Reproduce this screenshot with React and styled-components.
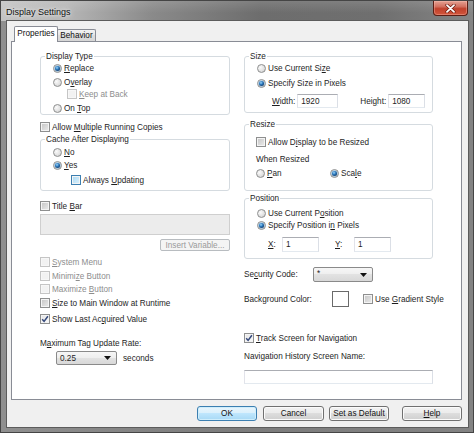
import React from "react";
import styled, { createGlobalStyle } from "styled-components";

const GlobalStyle = createGlobalStyle`
  html, body {
    margin: 0;
    padding: 0;
    background: #6e6e6e;
  }
  body {
    font-family: "Liberation Sans", Arial, sans-serif;
    font-size: 8.2px;
    color: #1e1e1e;
  }
`;

const Window = styled.div`
  width: 474px;
  height: 433px;
  box-sizing: border-box;
  display: flex;
  flex-direction: column;
  border: 1px solid #454545;
  background: linear-gradient(90deg, #8f8f8f 0%, #7c7c7c 50%, #838383 100%);
`;

const TitleBar = styled.div`
  height: 20px;
  flex: none;
  display: flex;
  align-items: flex-start;
  background:
    linear-gradient(rgba(255, 255, 255, 0.12), rgba(255, 255, 255, 0) 60%),
    linear-gradient(90deg, #c4c4c4 0%, #b6b6b6 14%, #8a8a8a 32%, #6d6d6d 55%, #6f6f6f 80%, #858585 100%);
`;

const Title = styled.div`
  padding: 5px 0 0 5px;
  font-size: 9px;
  line-height: 12px;
  color: #111;
  text-shadow: 0 0 6px #e8e8e8, 0 0 3px #f0f0f0;
`;

const CloseButton = styled.div`
  margin-left: auto;
  margin-right: 5px;
  width: 35px;
  height: 15px;
  box-sizing: border-box;
  border: 1px solid #5b1e14;
  border-top: none;
  border-radius: 0 0 4px 4px;
  display: flex;
  align-items: center;
  justify-content: center;
  background: linear-gradient(#e5a293 0%, #d2705f 40%, #c0412c 55%, #d2563c 100%);
  box-shadow: inset 0 0 0 1px rgba(255, 200, 190, 0.35);
`;

const Client = styled.div`
  flex: 1;
  margin: 0 5px 5px 6px;
  background: #f0f0f0;
  box-shadow: 0 0 0 1px #5c5c5c;
  padding: 5px 6px 0 4px;
  display: flex;
  flex-direction: column;
`;

const TabStrip = styled.div`
  height: 15px;
  display: flex;
  align-items: flex-start;
  padding-left: 3px;
`;

const Tab = styled.div`
  position: relative;
  z-index: ${(p) => (p.$active ? 2 : 1)};
  box-sizing: border-box;
  width: ${(p) => p.$w}px;
  height: ${(p) => (p.$active ? 16 : 12)}px;
  margin-top: ${(p) => (p.$active ? 0 : 3)}px;
  margin-left: ${(p) => (p.$active ? 0 : -1)}px;
  border: 1px solid #898c95;
  border-bottom: none;
  border-radius: 2px 2px 0 0;
  background: ${(p) => (p.$active ? "#fff" : "linear-gradient(#f3f3f3, #e4e4e4 50%, #dcdcdc 50%, #d6d6d6)")};
  display: flex;
  align-items: center;
  justify-content: center;
  padding-bottom: ${(p) => (p.$active ? 2 : 0)}px;
  color: #111;
`;

const Panel = styled.div`
  height: 359px;
  box-sizing: border-box;
  border: 1px solid #898c95;
  background: #fff;
  display: grid;
  grid-template-columns: 190px 189px;
  column-gap: 14px;
  align-content: start;
  padding: 9px 0 0 28px;
`;

const Column = styled.div`
  display: flex;
  flex-direction: column;
  min-width: 0;
`;

const Group = styled.fieldset`
  margin: ${(p) => p.$mt || 0}px 0 0 0;
  padding: 0 0 ${(p) => p.$pb || 0}px 0;
  border: 1px solid #d5dbe0;
  border-radius: 3px;
  min-width: 0;
`;

const Legend = styled.legend`
  margin-left: 4px;
  padding: 0 1px;
  height: 11px;
  line-height: 11px;
  font-size: 8.2px;
  color: #1e1e1e;
`;

const GroupBody = styled.div`
  display: flex;
  flex-direction: column;
  padding-left: 12px;
`;

const Row = styled.div`
  display: flex;
  align-items: center;
  height: ${(p) => p.$h || 12}px;
  margin-top: ${(p) => p.$mt || 0}px;
  margin-left: ${(p) => p.$ml || 0}px;
  color: ${(p) => (p.$disabled ? "#8d8d8d" : "#1e1e1e")};
  white-space: nowrap;
`;

const Text = styled.span`
  white-space: pre;
`;

const Label = styled.span`
  display: inline-block;
  width: ${(p) => (p.$w ? `${p.$w}px` : "auto")};
  margin-left: ${(p) => p.$ml || 0}px;
  flex: none;
`;

const U = styled.span`
  text-decoration: underline;
`;

const Box = styled.span`
  width: 10px;
  height: 10px;
  box-sizing: border-box;
  flex: none;
  margin-right: 2px;
  display: flex;
  align-items: center;
  justify-content: center;
  border: 1px solid ${(p) => (p.$disabled ? "#c5c5c5" : p.$hover ? "#3c7fb1" : "#8e8f8f")};
  box-shadow: inset 0 0 0 1px ${(p) => (p.$disabled ? "#f7f7f7" : "#f4f4f4")};
  background: ${(p) =>
    p.$disabled
      ? "#f2f2f2"
      : p.$hover
      ? "linear-gradient(135deg, #a9d8f3, #def2fc)"
      : p.$checked
      ? "linear-gradient(135deg, #e3e3e3, #fbfbfb)"
      : "linear-gradient(135deg, #c4c4c4, #ececec)"};
`;

const Dot = styled.span`
  width: 9px;
  height: 9px;
  margin-right: 2px;
  flex: none;
  box-sizing: border-box;
  border-radius: 50%;
  border: 1px solid #8e8f8f;
  background: radial-gradient(circle at 35% 35%, #fafafa 0%, #e2e2e2 55%, #c6c6c6 100%);
  display: flex;
  align-items: center;
  justify-content: center;
`;

const DotMark = styled.span`
  width: 5px;
  height: 5px;
  border-radius: 50%;
  background: radial-gradient(circle at 40% 35%, #9fd6f8 0%, #2a78bd 40%, #0d2d57 85%);
  box-shadow: 0 0 0 0.5px #7fb2da;
`;

const Field = styled.div`
  box-sizing: border-box;
  width: ${(p) => (p.$w ? `${p.$w}px` : "100%")};
  height: ${(p) => p.$h}px;
  margin-top: ${(p) => p.$mt || 0}px;
  margin-left: ${(p) => p.$ml || 0}px;
  flex: none;
  border: 1px solid;
  border-color: ${(p) => (p.$disabled ? "#cfcfcf" : "#abadb3 #dbdfe6 #e3e9ef #e2e3ea")};
  background: ${(p) => (p.$disabled ? "#ececec" : "#fff")};
  padding-left: 3px;
  display: flex;
  align-items: center;
  color: #1e1e1e;
`;

const Combo = styled.div`
  box-sizing: border-box;
  width: ${(p) => p.$w}px;
  height: ${(p) => p.$h}px;
  margin-left: ${(p) => p.$ml || 0}px;
  flex: none;
  border: 1px solid #8a8a8a;
  border-radius: 2px;
  background: linear-gradient(#f6f6f6, #eeeeee 50%, #e2e2e2 50%, #d8d8d8);
  display: flex;
  align-items: ${(p) => (p.$top ? "flex-start" : "center")};
  justify-content: space-between;
  padding: ${(p) => (p.$top ? "1px 5px 0 3px" : "0 5px 0 3px")};
  color: #1e1e1e;

  svg {
    align-self: center;
  }
`;

const ColorSwatch = styled.div`
  width: 17px;
  height: 16px;
  box-sizing: border-box;
  border: 1px solid #6a6a6a;
  background: #fff;
  flex: none;
`;

const SmallButton = styled.div`
  align-self: flex-end;
  margin-top: 4px;
  width: 70px;
  height: 12px;
  box-sizing: border-box;
  border: 1px solid #b8bcc0;
  border-radius: 2px;
  background: #f4f4f4;
  color: #9a9a9a;
  display: flex;
  align-items: center;
  justify-content: center;
`;

const ButtonBar = styled.div`
  display: flex;
  justify-content: flex-end;
  margin-top: 6px;
  height: 15px;
`;

const Button = styled.div`
  width: ${(p) => p.$w || 60}px;
  margin-left: ${(p) => p.$ml || 0}px;
  box-sizing: border-box;
  border: 1px solid ${(p) => (p.$default ? "#3c7fb1" : "#707070")};
  border-radius: 3px;
  background: ${(p) =>
    p.$default
      ? "linear-gradient(#eaf6fd, #d9f0fc 50%, #bee6fd 50%, #a7d9f5)"
      : "linear-gradient(#f2f2f2, #ebebeb 50%, #dddddd 50%, #cfcfcf)"};
  box-shadow: inset 0 0 0 1px ${(p) => (p.$default ? "#cfeefc" : "#fbfbfb")};
  display: flex;
  align-items: center;
  justify-content: center;
  color: #111;
`;

const Pair = styled.div`
  display: flex;
  align-items: center;
  width: ${(p) => (p.$w ? `${p.$w}px` : "auto")};
`;

const CheckMark = () => (
  <svg width="8" height="8" viewBox="0 0 8 8">
    <path d="M1.2 4.2 L3.1 6.4 L6.9 1.2" fill="none" stroke="#34487a" strokeWidth="1.5" />
  </svg>
);

const Arrow = () => (
  <svg width="7" height="4" viewBox="0 0 7 4">
    <path d="M0 0 H7 L3.5 4 Z" fill="#111" />
  </svg>
);

function Check({ checked, disabled, hover, children, ...rest }) {
  return (
    <Row $disabled={disabled} {...rest}>
      <Box $checked={checked} $disabled={disabled} $hover={hover}>
        {checked && <CheckMark />}
      </Box>
      <Text>{children}</Text>
    </Row>
  );
}

function Radio({ checked, children }) {
  return (
    <Pair>
      <Dot>{checked && <DotMark />}</Dot>
      <Text>{children}</Text>
    </Pair>
  );
}

function LeftColumn() {
  return (
    <Column>
      <Group>
        <Legend>Display Type</Legend>
        <GroupBody>
          <Row>
            <Radio checked>
              <U>R</U>eplace
            </Radio>
          </Row>
          <Row $mt={2}>
            <Radio>
              O<U>v</U>erlay
            </Radio>
          </Row>
          <Check disabled $ml={14}>
            <U>K</U>eep at Back
          </Check>
          <Row $mt={2}>
            <Radio>
              On <U>T</U>op
            </Radio>
          </Row>
        </GroupBody>
      </Group>

      <Check $mt={6}>
        Allow <U>M</U>ultiple Running Copies
      </Check>

      <Group $mt={1} $pb={4}>
        <Legend>Cache After Displaying</Legend>
        <GroupBody>
          <Row $mt={1}>
            <Radio>
              <U>N</U>o
            </Radio>
          </Row>
          <Row $mt={1}>
            <Radio checked>
              <U>Y</U>es
            </Radio>
          </Row>
          <Check hover $mt={3} $ml={18}>
            Always <U>U</U>pdating
          </Check>
        </GroupBody>
      </Group>

      <Check $mt={9}>
        Title <U>B</U>ar
      </Check>
      <Field $disabled $h={21} $mt={2} />
      <SmallButton>Insert Variable...</SmallButton>

      <Check disabled $mt={5}>
        <U>S</U>ystem Menu
      </Check>
      <Check disabled $mt={2}>
        Minimi<U>z</U>e Button
      </Check>
      <Check disabled $mt={1}>
        Maximize <U>B</U>utton
      </Check>
      <Check $mt={2}>
        <U>S</U>ize to Main Window at Runtime
      </Check>
      <Check checked $mt={4}>
        Show Last Ac<U>q</U>uired Value
      </Check>

      <Row $mt={12}>
        <Text>
          M<U>a</U>ximum Tag Update Rate:
        </Text>
      </Row>
      <Row $mt={2} $h={14}>
        <Combo $w={61} $h={14} $ml={16}>
          <span>0.25</span>
          <Arrow />
        </Combo>
        <Label $ml={6}>seconds</Label>
      </Row>
    </Column>
  );
}

function RightColumn() {
  return (
    <Column>
      <Group $pb={4}>
        <Legend>Size</Legend>
        <GroupBody>
          <Row>
            <Radio>
              Use Current Si<U>z</U>e
            </Radio>
          </Row>
          <Row $mt={3}>
            <Radio checked>Specify Size in Pixels</Radio>
          </Row>
          <Row $mt={5} $h={14}>
            <Label $ml={15}>
              <U>W</U>idth:
            </Label>
            <Field $w={41} $h={14} $ml={2}>
              1920
            </Field>
            <Label $ml={22}>
              Hei<U>g</U>ht:
            </Label>
            <Field $w={37} $h={14} $ml={2}>
              1080
            </Field>
          </Row>
        </GroupBody>
      </Group>

      <Group $mt={6} $pb={11}>
        <Legend>Resize</Legend>
        <GroupBody>
          <Check $mt={6} $ml={-1}>
            Allow D<U>i</U>splay to be Resized
          </Check>
          <Row $mt={5} $ml={-1}>
            When Resized
          </Row>
          <Row $mt={2} $ml={-1}>
            <Pair $w={74}>
              <Radio>
                <U>P</U>an
              </Radio>
            </Pair>
            <Radio checked>
              Sca<U>l</U>e
            </Radio>
          </Row>
        </GroupBody>
      </Group>

      <Group $mt={2} $pb={6}>
        <Legend>Position</Legend>
        <GroupBody>
          <Row $mt={3}>
            <Radio>
              Use Current P<U>o</U>sition
            </Radio>
          </Row>
          <Row>
            <Radio checked>
              Specify Position i<U>n</U> Pixels
            </Radio>
          </Row>
          <Row $mt={6} $h={15}>
            <Label $w={14} $ml={11}>
              <U>X</U>:
            </Label>
            <Field $w={37} $h={15}>
              1
            </Field>
            <Label $w={19} $ml={16}>
              <U>Y</U>:
            </Label>
            <Field $w={37} $h={15}>
              1
            </Field>
          </Row>
        </GroupBody>
      </Group>

      <Row $mt={8} $h={15}>
        <Label $w={69}>
          Se<U>c</U>urity Code:
        </Label>
        <Combo $w={60} $h={15} $top>
          <span>*</span>
          <Arrow />
        </Combo>
      </Row>
      <Row $mt={9} $h={16}>
        <Label $w={88}>Background Color:</Label>
        <ColorSwatch />
        <Check $ml={14}>
          Use <U>G</U>radient Style
        </Check>
      </Row>

      <Check checked $mt={25}>
        <U>T</U>rack Screen for Navigation
      </Check>
      <Row $mt={6}>Navigation History Screen Name:</Row>
      <Field $h={14} $mt={8} />
    </Column>
  );
}

export default function App() {
  return (
    <>
      <GlobalStyle />
      <Window>
        <TitleBar>
          <Title>Display Settings</Title>
          <CloseButton>
            <svg width="11" height="9" viewBox="0 0 11 9">
              <path d="M2 1.2 L9 7.8 M9 1.2 L2 7.8" stroke="#6b1c10" strokeWidth="3.2" strokeLinecap="round" />
              <path d="M2 1.2 L9 7.8 M9 1.2 L2 7.8" stroke="#fff" strokeWidth="1.8" strokeLinecap="round" />
            </svg>
          </CloseButton>
        </TitleBar>
        <Client>
          <TabStrip>
            <Tab $active $w={44}>Properties</Tab>
            <Tab $w={39}>Behavior</Tab>
          </TabStrip>
          <Panel>
            <LeftColumn />
            <RightColumn />
          </Panel>
          <ButtonBar>
            <Button $default>OK</Button>
            <Button $w={61} $ml={6}>Cancel</Button>
            <Button $ml={5}>Set as Default</Button>
            <Button $ml={13}>
              <U>H</U>elp
            </Button>
          </ButtonBar>
        </Client>
      </Window>
    </>
  );
}
